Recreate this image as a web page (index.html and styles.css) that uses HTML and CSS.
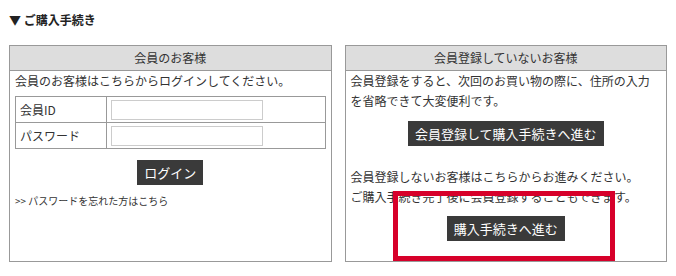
FILE: index.html
```html
<!DOCTYPE html>
<html lang="ja">
<head>
    <meta charset="UTF-8">
    <meta name="viewport" content="width=device-width, initial-scale=1.0">
    <title>ご購入手続き</title>
    <link rel="stylesheet" href="styles.css">
</head>
<body>

    <!-- Section title -->
    <h2 class="section-title">▼ ご購入手続き</h2>

    <div class="entry">

        <!-- Members -->
        <div class="box">
            <div class="box-head">会員のお客様</div>
            <div class="box-body">
                <p>会員のお客様はこちらからログインしてください。</p>
                <table class="login-table">
                    <tr>
                        <th>会員ID</th>
                        <td><input type="text" class="field"></td>
                    </tr>
                    <tr>
                        <th>パスワード</th>
                        <td><input type="password" class="field"></td>
                    </tr>
                </table>
                <div class="btn-wrap"><button class="btn">ログイン</button></div>
                <p class="forgot"><a href="#">&gt;&gt; パスワードを忘れた方はこちら</a></p>
            </div>
        </div>

        <!-- Guests -->
        <div class="box guest">
            <div class="box-head">会員登録していないお客様</div>
            <div class="box-body">
                <p>会員登録をすると、次回のお買い物の際に、住所の入力を省略できて大変便利です。</p>
                <div class="btn-wrap"><button class="btn">会員登録して購入手続きへ進む</button></div>
                <p class="guest-note">会員登録しないお客様はこちらからお進みください。<br>ご購入手続き完了後に会員登録することもできます。</p>
                <div class="btn-wrap tight"><button class="btn">購入手続きへ進む</button></div>
            </div>
            <div class="highlight"></div>
        </div>

    </div>

</body>
</html>
```

FILE: styles.css
```css
* { margin: 0; padding: 0; box-sizing: border-box; }
body {
    padding: 10px 9px 0 9px;
    background: #fff; color: #333;
    font-family: "Noto Sans CJK JP", "Noto Sans", sans-serif;
    font-size: 12px; line-height: 20px;
}

.section-title { font-size: 12px; font-weight: bold; line-height: 20px; margin-bottom: 15px; color: #222; }

.entry { display: flex; gap: 13px; width: 658px; }

/* Boxes */
.box { flex: 1; height: 217px; border: 1px solid #999; }
.guest { position: relative; }
.box-head { height: 25px; line-height: 24px; background: #ddd; border-bottom: 1px solid #999; text-align: center; }
.box-body { padding: 0 5px; }

/* Login table */
.login-table { width: 100%; margin-top: 5px; border-collapse: collapse; border: 1px solid #999; }
.login-table th, .login-table td { height: 26px; border: 1px solid #999; padding: 0 4px; text-align: left; font-weight: normal; }
.login-table th { width: 91px; }
.field { display: block; width: 152px; height: 20px; border: 1px solid #ccc; }

/* Buttons */
.btn-wrap { margin-top: 11px; text-align: center; }
.btn {
    height: 25px; padding: 0 7px; border: none; border-radius: 0;
    background: #3a3a3a; color: #fff; cursor: pointer;
    font-family: inherit; font-size: 13px; line-height: 25px;
}
.guest .btn-wrap { margin-top: 10px; }
.guest .btn-wrap.tight { margin-top: 9px; }
.guest-note { margin-top: 21px; }

.forgot { margin-top: 9px; font-size: 10px; line-height: 14px; }
.forgot a { color: #333; text-decoration: none; }

/* Red marker over the guest button */
.highlight { position: absolute; left: 47px; top: 145px; width: 222px; height: 70px; border: 5px solid #d7002a; }
```
